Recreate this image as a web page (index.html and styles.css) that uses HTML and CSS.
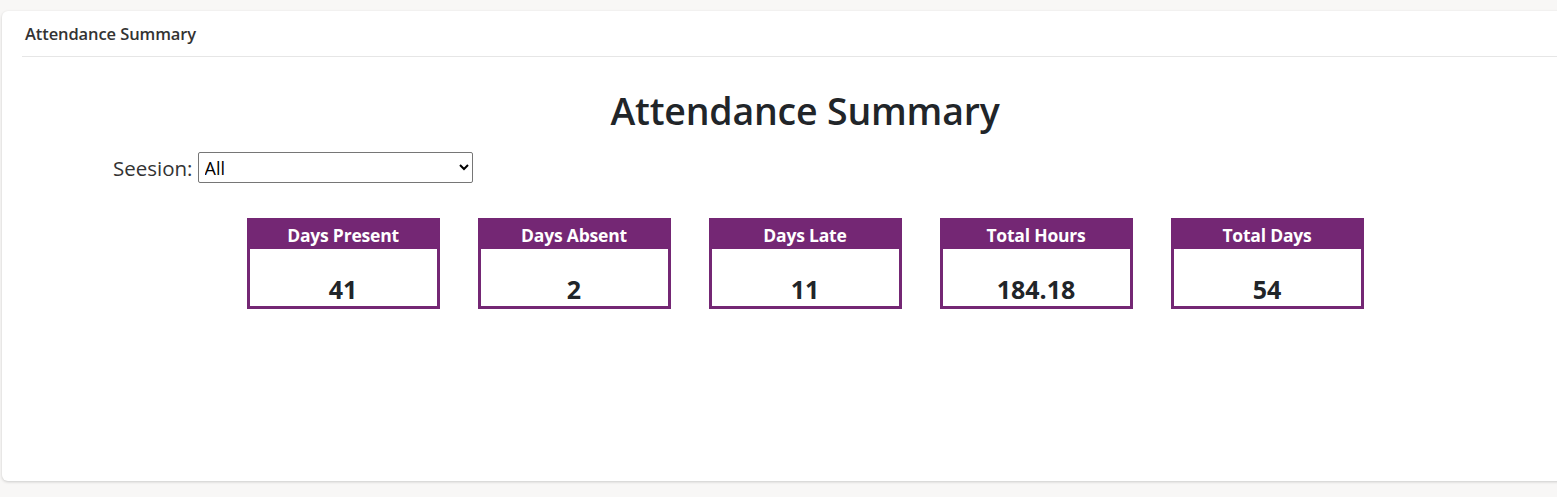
FILE: index.html
```html
<!DOCTYPE html>
<html>
<head>
<meta charset="utf-8">
<link rel="stylesheet" href="styles.css">
</head>
<body>
<div class="card">
  <div class="card-header">Attendance Summary</div>
  <div class="card-body">
    <h1 class="title">Attendance Summary</h1>
    <div class="filter">
      <label class="filter-label" for="session">Seesion:</label>
      <select id="session" class="filter-select"><option>All</option></select>
    </div>
    <div class="stats">
      <div class="stat"><div class="stat-head">Days Present</div><div class="stat-value">41</div></div>
      <div class="stat"><div class="stat-head">Days Absent</div><div class="stat-value">2</div></div>
      <div class="stat"><div class="stat-head">Days Late</div><div class="stat-value">11</div></div>
      <div class="stat"><div class="stat-head">Total Hours</div><div class="stat-value">184.18</div></div>
      <div class="stat"><div class="stat-head">Total Days</div><div class="stat-value">54</div></div>
    </div>
  </div>
</div>
</body>
</html>
```
FILE: styles.css
```css
html, body {
  margin: 0;
  padding: 0;
  overflow: hidden;
}
body {
  background: #f8f7f6;
  font-family: "Open Sans", "Noto Sans", sans-serif;
  color: #212529;
  padding: 11px 0 0 2px;
  height: 497px;
  box-sizing: border-box;
}
.card {
  width: 1586px;
  height: 470px;
  background: #fff;
  border-radius: 6px;
  box-shadow: 0 1px 3px rgba(0,0,0,0.18);
  padding: 0 0 0 20px;
  box-sizing: border-box;
}
.card-header {
  font-size: 16.5px;
  font-weight: 600;
  color: #333;
  height: 45px;
  line-height: 46px;
  padding-left: 3px;
  border-bottom: 1px solid #e6e6e6;
  letter-spacing: -0.1px;
}
.card-body {
  display: flex;
  flex-direction: column;
}
.title {
  margin: 30px 0 0 0;
  text-align: center;
  font-size: 37.5px;
  font-weight: 600;
  line-height: 48px;
  color: #212529;
  letter-spacing: -0.2px;
}
.filter {
  display: flex;
  align-items: center;
  margin: 17px 0 0 91px;
}
.filter-label {
  font-size: 20.5px;
  color: #333;
  margin-right: 5px;
}
.filter-select {
  width: 275px;
  height: 31px;
  font-family: "Open Sans", "Noto Sans", sans-serif;
  font-size: 18px;
  color: #000;
  border: 1px solid #767676;
  border-radius: 2px;
  background: #fff;
  padding: 0 2px;
}
.stats {
  display: flex;
  justify-content: center;
  gap: 38px;
  margin-top: 35px;
}
.stat {
  width: 193px;
  height: 91px;
  border: 3px solid #742774;
  box-sizing: border-box;
  display: flex;
  flex-direction: column;
}
.stat-head {
  background: #742774;
  color: #fff;
  font-weight: 700;
  font-size: 17.5px;
  text-align: center;
  height: 28px;
  line-height: 28px;
  letter-spacing: -0.2px;
}
.stat-value {
  flex: 1;
  display: flex;
  align-items: flex-end;
  justify-content: center;
  font-size: 25px;
  font-weight: 700;
  color: #212529;
  line-height: 33px;
}
```
